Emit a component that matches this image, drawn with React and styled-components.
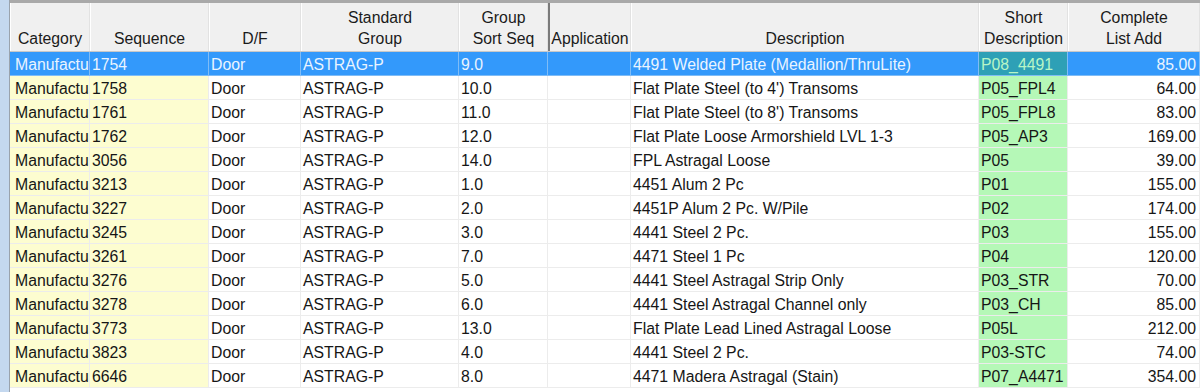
import React from 'react';
import styled, { createGlobalStyle, css } from 'styled-components';

const columns = [
  { key: 'category', title: ['Category'], width: 80, tint: 'yellow', pad: 5 },
  { key: 'sequence', title: ['Sequence'], width: 119, tint: 'yellow' },
  { key: 'df', title: ['D/F'], width: 92 },
  { key: 'group', title: ['Standard', 'Group'], width: 158 },
  { key: 'sort', title: ['Group', 'Sort Seq'], width: 89 },
  { key: 'app', title: ['Application'], width: 83, splitter: true },
  { key: 'desc', title: ['Description'], width: 348 },
  { key: 'short', title: ['Short', 'Description'], width: 89, tint: 'green' },
  { key: 'price', title: ['Complete', 'List Add'], width: 132, right: true },
];

const rows = [
  ['1754', '9.0', '4491 Welded Plate (Medallion/ThruLite)', 'P08_4491', '85.00'],
  ['1758', '10.0', "Flat Plate Steel (to 4') Transoms", 'P05_FPL4', '64.00'],
  ['1761', '11.0', "Flat Plate Steel (to 8') Transoms", 'P05_FPL8', '83.00'],
  ['1762', '12.0', 'Flat Plate Loose Armorshield LVL 1-3', 'P05_AP3', '169.00'],
  ['3056', '14.0', 'FPL Astragal Loose', 'P05', '39.00'],
  ['3213', '1.0', '4451 Alum 2 Pc', 'P01', '155.00'],
  ['3227', '2.0', '4451P Alum 2 Pc. W/Pile', 'P02', '174.00'],
  ['3245', '3.0', '4441 Steel 2 Pc.', 'P03', '155.00'],
  ['3261', '7.0', '4471 Steel 1 Pc', 'P04', '120.00'],
  ['3276', '5.0', '4441 Steel Astragal Strip Only', 'P03_STR', '70.00'],
  ['3278', '6.0', '4441 Steel Astragal Channel only', 'P03_CH', '85.00'],
  ['3773', '13.0', 'Flat Plate Lead Lined Astragal Loose', 'P05L', '212.00'],
  ['3823', '4.0', '4441 Steel 2 Pc.', 'P03-STC', '74.00'],
  ['6646', '8.0', '4471 Madera Astragal (Stain)', 'P07_A4471', '354.00'],
].map(([sequence, sort, desc, short, price]) => ({
  category: 'Manufacturer',
  sequence,
  df: 'Door',
  group: 'ASTRAG-P',
  sort,
  app: '',
  desc,
  short,
  price,
}));

const template = columns.map((c) => `${c.width}px`).join(' ');

const GlobalStyle = createGlobalStyle`
  body {
    margin: 0;
    background: #ffffff;
    font-family: "Liberation Sans", Arial, sans-serif;
    overflow: hidden;
  }
`;

const Window = styled.div`
  display: flex;
  width: 1200px;
  height: 392px;
  background: #ffffff;
`;

const Gutter = styled.div`
  width: 9px;
  flex: none;
  background: #c4d8ef;
  border-right: 1px solid #9aa3ad;
`;

const Grid = styled.div`
  flex: 1;
  min-width: 0;
  overflow: hidden;
  border-top: 3px solid #a9a9a9;
`;

const HeaderRow = styled.div`
  display: grid;
  grid-template-columns: ${template};
  height: 48px;
  background: #f0f0f0;
  border-bottom: 1px solid #c8c8c8;
`;

const HeaderCell = styled.div`
  display: flex;
  flex-direction: column;
  justify-content: flex-end;
  align-items: center;
  padding-bottom: 2px;
  font-size: 15.8px;
  line-height: 21px;
  color: #1b1b1b;
  white-space: nowrap;
  overflow: hidden;
  border-left: 1px solid #ffffff;
  border-right: 1px solid #e2e2e2;
  ${(p) =>
    p.$splitter &&
    css`
      border-left: 2px solid #7a7a7a;
    `}
`;

const Row = styled.div`
  display: grid;
  grid-template-columns: ${template};
  height: 24px;
  ${(p) =>
    p.$selected &&
    css`
      background: #3399fb;
    `}
`;

const tints = {
  yellow: '#fdfdd0',
  green: '#b5f8b7',
};

const Cell = styled.div`
  display: flex;
  align-items: center;
  justify-content: ${(p) => (p.$right ? 'flex-end' : 'flex-start')};
  padding: 2px ${(p) => (p.$right ? 3 : 2)}px 0 ${(p) => p.$pad || 2}px;
  font-size: 15.8px;
  color: #161616;
  white-space: nowrap;
  overflow: hidden;
  background: ${(p) => (p.$tint ? tints[p.$tint] : 'transparent')};
  border-right: 1px solid #ececec;
  border-bottom: 1px solid #ececec;
  ${(p) =>
    p.$selected &&
    css`
      color: #eaf4ff;
      background: ${p.$tint === 'green' ? '#2ea0b6' : 'transparent'};
      ${p.$tint === 'green' && 'color: #b8f5c6;'}
      border-right-color: #7fbcf6;
      border-bottom-color: #7fbcf6;
    `}
`;

const App = () => {
  return (
    <Window>
      <GlobalStyle />
      <Gutter />
      <Grid>
        <HeaderRow>
          {columns.map((col) => (
            <HeaderCell key={col.key} $splitter={col.splitter}>
              {col.title.map((line) => (
                <span key={line}>{line}</span>
              ))}
            </HeaderCell>
          ))}
        </HeaderRow>
        {rows.map((row, index) => (
          <Row key={row.sequence} $selected={index === 0}>
            {columns.map((col) => (
              <Cell
                key={col.key}
                $tint={col.tint}
                $right={col.right}
                $pad={col.pad}
                $selected={index === 0}
              >
                {row[col.key]}
              </Cell>
            ))}
          </Row>
        ))}
      </Grid>
    </Window>
  );
};

export default App;
